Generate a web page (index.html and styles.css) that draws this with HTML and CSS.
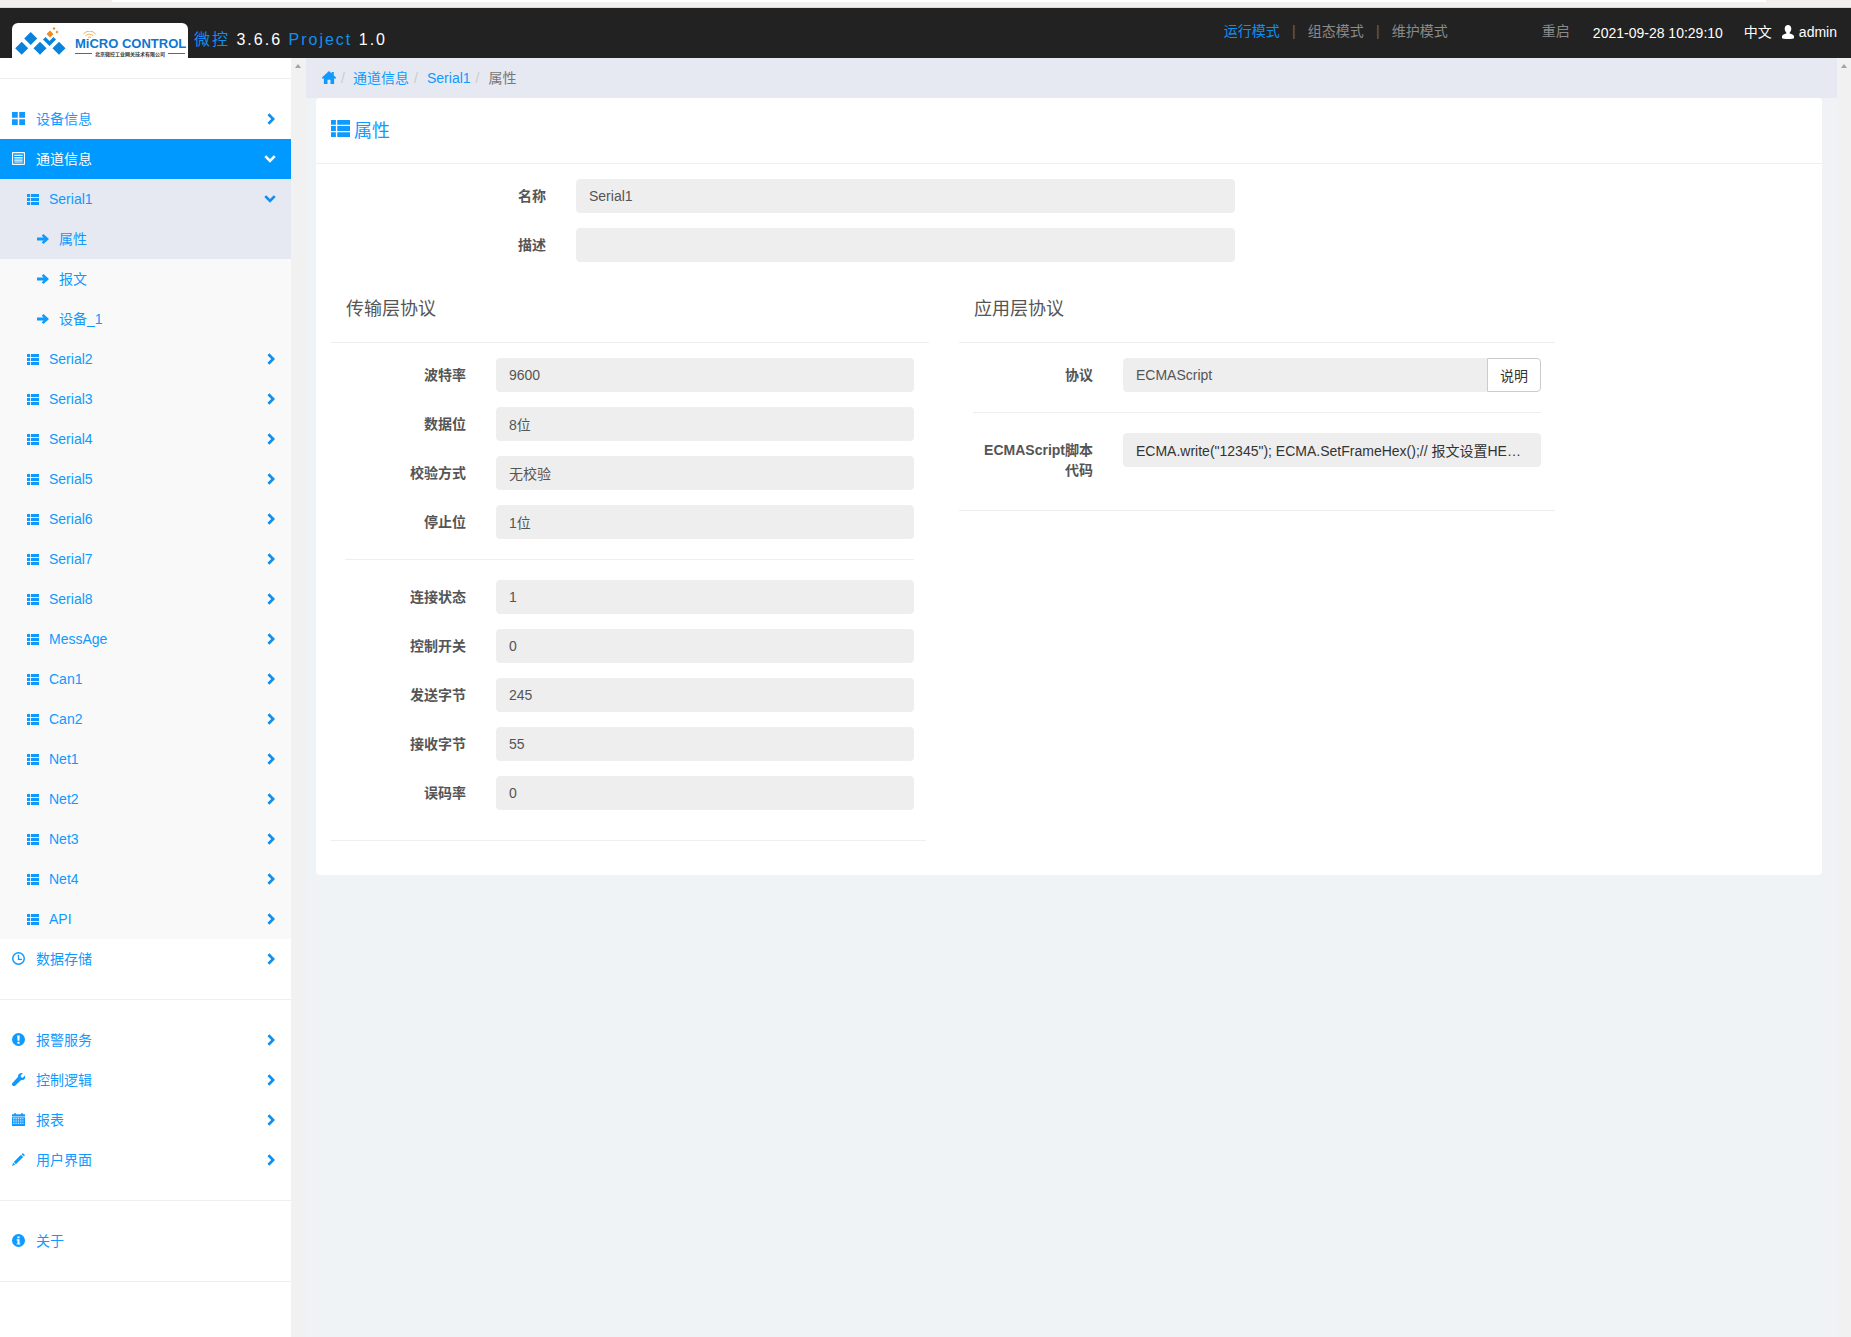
FILE: index.html
```html
<!DOCTYPE html>
<html lang="zh">
<head>
<meta charset="utf-8">
<title>微控 3.6.6</title>
<link rel="stylesheet" href="styles.css">
</head>
<body>
<svg class="defs" width="0" height="0" aria-hidden="true">
  <defs>
    <symbol id="i-large" viewBox="0 0 14 14"><path d="M0 0h6.200v6.200H0zM7.800 0H14v6.200H7.800zM0 7.800h6.200V14H0zM7.800 7.800H14V14H7.800z"/></symbol>
    <symbol id="i-listalt" viewBox="0 0 14 14"><path fill-rule="evenodd" d="M1 0h12a1 1 0 0 1 1 1v12a1 1 0 0 1-1 1H1a1 1 0 0 1-1-1V1a1 1 0 0 1 1-1zm.2 1.300v11.400h11.600V1.300zM2.500 3h9v1.400h-9zm0 2.500h9v1.400h-9zm0 2.500h9v1.400h-9zm0 2.200h9v1.200h-9z"/></symbol>
    <symbol id="i-list" viewBox="0 0 14 12" preserveAspectRatio="none"><path d="M0 0h3.600v3.400H0zM4.600 0H14v3.400H4.600zM0 4.300h3.600v3.400H0zM4.600 4.300H14v3.400H4.600zM0 8.600h3.600V12H0zM4.600 8.600H14V12H4.600z"/></symbol>
    <symbol id="i-arrow" viewBox="0 0 14 12" preserveAspectRatio="none"><path d="M7.500 0L14 6l-6.500 6-2-2 2.300-2.200H0V4.200h7.800L5.500 2z"/></symbol>
    <symbol id="i-home" viewBox="0 0 14 13"><path d="M7 0l2.600 2.400V1h2.200v3.400L14 6.600v.9h-1.900V13H8.500V8.700h-3V13H1.900V7.500H0v-.9z"/></symbol>
    <symbol id="i-user" viewBox="0 0 14 14"><path d="M7 0c2 0 3.300 1.600 3.300 3.800 0 1.500-.6 2.800-1.600 3.600v1c2.500.6 4.300 1.400 4.300 3v1.600c0 .6-2.600 1-6 1s-6-.4-6-1v-1.600c0-1.600 1.800-2.400 4.300-3v-1c-1-.8-1.600-2.100-1.600-3.600C3.700 1.600 5 0 7 0z"/></symbol>
    <symbol id="i-time" viewBox="0 0 14 14"><path fill-rule="evenodd" d="M7 0a7 7 0 1 1 0 14A7 7 0 0 1 7 0zm0 1.600a5.400 5.400 0 1 0 0 10.800A5.400 5.400 0 0 0 7 1.600zM6.300 3h1.400v4.300h3v1.400H6.300z"/></symbol>
    <symbol id="i-excl" viewBox="0 0 14 14"><path fill-rule="evenodd" d="M7 0a7 7 0 1 1 0 14A7 7 0 0 1 7 0zM5.600 2.600L6 8.300h2l.4-5.700zM5.800 9.300v2.200h2.400V9.300z"/></symbol>
    <symbol id="i-wrench" viewBox="0 0 14 14"><path d="M10.300 0c.5 0 1 .1 1.400.3L9.300 2.700l.4 1.900 1.900.4L14 2.600c.3.500.3 1 .3 1.500 0 2.300-2.200 4-4.400 3.500L3 14c-.7.600-1.600.2-2.400-.6C-.1 12.700-.4 11.800.2 11l6.400-6.900C6 1.900 8 0 10.300 0z"/></symbol>
    <symbol id="i-cal" viewBox="0 0 14 14"><path fill-rule="evenodd" d="M2.500 0h1.600v1.400h5.800V0h1.600v1.400H14v2.400H0V1.400h2.500zM0 4.600h14V14H0zm1.200 1v1.200h1.500V5.600zm2.500 0v1.200h1.500V5.600zm2.500 0v1.200h1.500V5.600zm2.500 0v1.200h1.500V5.600zm2.500 0v1.200h1.100V5.600zM1.200 8v1.200h1.500V8zm2.500 0v1.200h1.500V8zm2.500 0v1.200h1.500V8zm2.500 0v1.200h1.500V8zm2.500 0v1.200h1.100V8zm-10 2.400v1.200h1.500v-1.200zm2.500 0v1.200h1.500v-1.200zm2.500 0v1.200h1.500v-1.200zm2.500 0v1.200h1.500v-1.200zm2.500 0v1.200h1.100v-1.200z"/></symbol>
    <symbol id="i-pencil" viewBox="0 0 14 14"><path d="M11.700 0L14 2.300 12.700 3.600 10.400 1.300zM9.700 2l2.300 2.300-7.800 7.800-2.300-2.300zM1.300 10.500l2.200 2.200L0 14z"/></symbol>
    <symbol id="i-info" viewBox="0 0 14 14"><path fill-rule="evenodd" d="M7 0a7 7 0 1 1 0 14A7 7 0 0 1 7 0zM5.800 2.700v2h2.400v-2zM5 5.700v1.200h.9v3.200H5v1.200h4v-1.200h-.9V5.700z"/></symbol>
    <symbol id="i-right" viewBox="0 0 8 12"><path d="M0.500 2.200L2.400 0.300 8 6 2.400 11.700 0.500 9.800 4.200 6z"/></symbol>
    <symbol id="i-down" viewBox="0 0 12 8"><path d="M0.300 2.100L2.200 0.300 6 4 9.800 0.300 11.700 2.100 6 7.700z"/></symbol>
  </defs>
</svg>

<div class="chrome-strip"><div class="chrome-tab"></div></div>

<header class="topbar">
  <div class="logo">
    <svg class="logo-mark" viewBox="0 0 52 29" width="52" height="29">
      <path class="dia" d="M15.700 5l6.500 6.500-6.500 6.500-6.500-6.500zM6.700 14.800l6.500 6.500-6.500 6.500L.2 21.300zM25 14.800l6.500 6.500-6.500 6.500-6.500-6.500zM44 14.800l6.500 6.500-6.500 6.500-6.500-6.500zM28 12.500l2.500-2.500 4 4 4-4 2.500 2.500-6.500 6.500z"/>
      <path class="dot" d="M35 3.500L38.500 7 35 10.500 31.500 7zM39 0l1.500 1.500L39 3l-1.500-1.500zM42 3.500L43.500 5 42 6.500 40.500 5z"/>
    </svg>
    <div class="logo-words">
      <svg class="logo-wifi" viewBox="0 0 16 9" width="15" height="8"><path d="M1 3.500a9 9 0 0 1 14 0M3.500 5.500a6 6 0 0 1 9 0M6 7.500a3 3 0 0 1 4 0"/></svg>
      <div class="logo-en">MiCRO CONTROL</div>
      <div class="logo-cn">北京微控工业网关技术有限公司</div>
    </div>
  </div>
  <div class="brand"><span class="brand-blue">微控</span> 3.6.6 <span class="brand-blue">Project</span> 1.0</div>
  <nav class="modes">
    <a class="mode current">运行模式</a><span class="mode-sep">|</span>
    <a class="mode">组态模式</a><span class="mode-sep">|</span>
    <a class="mode">维护模式</a>
  </nav>
  <a class="restart">重启</a>
  <span class="clock">2021-09-28 10:29:10</span>
  <span class="lang">中文</span>
  <span class="account"><svg class="ico ico-user"><use href="#i-user"/></svg>admin</span>
</header>

<div class="shell">
  <aside class="sidebar">
    <div class="side-group side-first">
      <a class="side-item"><svg class="ico"><use href="#i-large"/></svg><span class="side-label">设备信息</span><svg class="chev"><use href="#i-right"/></svg></a>
      <a class="side-item is-active"><svg class="ico"><use href="#i-listalt"/></svg><span class="side-label">通道信息</span><svg class="chev-d"><use href="#i-down"/></svg></a>
      <a class="side-item lvl2 is-open"><svg class="ico"><use href="#i-list"/></svg><span class="side-label">Serial1</span><svg class="chev-d"><use href="#i-down"/></svg></a>
      <a class="side-item lvl3 is-open"><svg class="ico"><use href="#i-arrow"/></svg><span class="side-label">属性</span></a>
      <a class="side-item lvl3 sub"><svg class="ico"><use href="#i-arrow"/></svg><span class="side-label">报文</span></a>
      <a class="side-item lvl3 sub"><svg class="ico"><use href="#i-arrow"/></svg><span class="side-label">设备_1</span></a>
      <a class="side-item lvl2 sub"><svg class="ico"><use href="#i-list"/></svg><span class="side-label">Serial2</span><svg class="chev"><use href="#i-right"/></svg></a>
      <a class="side-item lvl2 sub"><svg class="ico"><use href="#i-list"/></svg><span class="side-label">Serial3</span><svg class="chev"><use href="#i-right"/></svg></a>
      <a class="side-item lvl2 sub"><svg class="ico"><use href="#i-list"/></svg><span class="side-label">Serial4</span><svg class="chev"><use href="#i-right"/></svg></a>
      <a class="side-item lvl2 sub"><svg class="ico"><use href="#i-list"/></svg><span class="side-label">Serial5</span><svg class="chev"><use href="#i-right"/></svg></a>
      <a class="side-item lvl2 sub"><svg class="ico"><use href="#i-list"/></svg><span class="side-label">Serial6</span><svg class="chev"><use href="#i-right"/></svg></a>
      <a class="side-item lvl2 sub"><svg class="ico"><use href="#i-list"/></svg><span class="side-label">Serial7</span><svg class="chev"><use href="#i-right"/></svg></a>
      <a class="side-item lvl2 sub"><svg class="ico"><use href="#i-list"/></svg><span class="side-label">Serial8</span><svg class="chev"><use href="#i-right"/></svg></a>
      <a class="side-item lvl2 sub"><svg class="ico"><use href="#i-list"/></svg><span class="side-label">MessAge</span><svg class="chev"><use href="#i-right"/></svg></a>
      <a class="side-item lvl2 sub"><svg class="ico"><use href="#i-list"/></svg><span class="side-label">Can1</span><svg class="chev"><use href="#i-right"/></svg></a>
      <a class="side-item lvl2 sub"><svg class="ico"><use href="#i-list"/></svg><span class="side-label">Can2</span><svg class="chev"><use href="#i-right"/></svg></a>
      <a class="side-item lvl2 sub"><svg class="ico"><use href="#i-list"/></svg><span class="side-label">Net1</span><svg class="chev"><use href="#i-right"/></svg></a>
      <a class="side-item lvl2 sub"><svg class="ico"><use href="#i-list"/></svg><span class="side-label">Net2</span><svg class="chev"><use href="#i-right"/></svg></a>
      <a class="side-item lvl2 sub"><svg class="ico"><use href="#i-list"/></svg><span class="side-label">Net3</span><svg class="chev"><use href="#i-right"/></svg></a>
      <a class="side-item lvl2 sub"><svg class="ico"><use href="#i-list"/></svg><span class="side-label">Net4</span><svg class="chev"><use href="#i-right"/></svg></a>
      <a class="side-item lvl2 sub"><svg class="ico"><use href="#i-list"/></svg><span class="side-label">API</span><svg class="chev"><use href="#i-right"/></svg></a>
      <a class="side-item"><svg class="ico"><use href="#i-time"/></svg><span class="side-label">数据存储</span><svg class="chev"><use href="#i-right"/></svg></a>
    </div>
    <div class="side-group">
      <a class="side-item"><svg class="ico"><use href="#i-excl"/></svg><span class="side-label">报警服务</span><svg class="chev"><use href="#i-right"/></svg></a>
      <a class="side-item"><svg class="ico"><use href="#i-wrench"/></svg><span class="side-label">控制逻辑</span><svg class="chev"><use href="#i-right"/></svg></a>
      <a class="side-item"><svg class="ico"><use href="#i-cal"/></svg><span class="side-label">报表</span><svg class="chev"><use href="#i-right"/></svg></a>
      <a class="side-item"><svg class="ico"><use href="#i-pencil"/></svg><span class="side-label">用户界面</span><svg class="chev"><use href="#i-right"/></svg></a>
    </div>
    <div class="side-group">
      <a class="side-item"><svg class="ico"><use href="#i-info"/></svg><span class="side-label">关于</span></a>
    </div>
  </aside>
  <div class="scrollbar"><span class="scroll-up"></span></div>

  <main class="main">
    <div class="crumbs">
      <a class="crumb-home"><svg class="ico ico-home"><use href="#i-home"/></svg></a><span class="crumb-sep">/</span>
      <a>通道信息</a><span class="crumb-sep crumb-sep-wide">/</span>
      <a>Serial1</a><span class="crumb-sep crumb-sep-wide">/</span>
      <span class="crumb-now">属性</span>
    </div>
    <section class="card">
      <h2 class="card-title"><svg class="ico ico-title"><use href="#i-list"/></svg>属性</h2>
      <div class="form-top">
        <div class="row"><label class="lbl">名称</label><input class="field" readonly value="Serial1"></div>
        <div class="row"><label class="lbl">描述</label><input class="field" readonly value=""></div>
      </div>
      <div class="cols">
        <div class="col col-left">
          <h3 class="col-title">传输层协议</h3>
          <div class="col-body">
            <div class="row"><label class="lbl">波特率</label><input class="field" readonly value="9600"></div>
            <div class="row"><label class="lbl">数据位</label><input class="field" readonly value="8位"></div>
            <div class="row"><label class="lbl">校验方式</label><input class="field" readonly value="无校验"></div>
            <div class="row"><label class="lbl">停止位</label><input class="field" readonly value="1位"></div>
            <hr class="rule">
            <div class="row"><label class="lbl">连接状态</label><input class="field" readonly value="1"></div>
            <div class="row"><label class="lbl">控制开关</label><input class="field" readonly value="0"></div>
            <div class="row"><label class="lbl">发送字节</label><input class="field" readonly value="245"></div>
            <div class="row"><label class="lbl">接收字节</label><input class="field" readonly value="55"></div>
            <div class="row"><label class="lbl">误码率</label><input class="field" readonly value="0"></div>
          </div>
        </div>
        <div class="col col-right">
          <h3 class="col-title">应用层协议</h3>
          <div class="col-body">
            <div class="row">
              <label class="lbl">协议</label>
              <div class="input-group"><input class="field" readonly value="ECMAScript"><button class="btn-help" type="button">说明</button></div>
            </div>
            <hr class="rule">
            <div class="row">
              <label class="lbl lbl-wrap">ECMAScript脚本代码</label>
              <input class="field field-dark" readonly value='ECMA.write("12345"); ECMA.SetFrameHex();// 报文设置HEX格式 ECMA.Send();'>
            </div>
          </div>
        </div>
      </div>
    </section>
  </main>
  <div class="scrollbar scrollbar-page"><span class="scroll-up"></span></div>
</div>
</body>
</html>
```
FILE: styles.css
```css
* { box-sizing: border-box; }
html, body { margin: 0; height: 1337px; overflow: hidden; }
body {
  font-family: "Liberation Sans", "Noto Sans CJK SC", sans-serif;
  font-size: 14px;
  color: #555;
  background: #eff3f6;
}
a { color: #0f9aff; text-decoration: none; }
.defs { position: absolute; }

.ico { width: 14px; height: 14px; fill: currentColor; flex: none; }

/* browser strip */
.chrome-strip { height: 8px; background: #f1f0ee; border-bottom: 1px solid #d9d9d9; padding-left: 112px; padding-right: 85px; }
.chrome-tab { height: 2px; background: #fff; }

/* top bar */
.topbar {
  height: 50px;
  background: #222;
  color: #fff;
  display: flex;
  align-items: flex-start;
  padding-left: 12px;
  overflow: hidden;
}
.logo {
  width: 176px;
  height: 35px;
  margin-top: 15px;
  background: #fff;
  border-radius: 6px 6px 0 0;
  display: flex;
  flex: none;
  padding: 4px 3px 0;
  gap: 8px;
}
.logo-mark { flex: none; }
.dia { fill: #0a82dc; }
.dot { fill: #f08a1d; }
.logo-words { display: flex; flex-direction: column; width: 110px; position: relative; padding-top: 11px; flex: none; }
.logo-wifi { position: absolute; top: 4px; left: 7px; fill: none; stroke: #f0a63a; stroke-width: 1; }
.logo-en {
  font: 700 13px/12px "Liberation Sans", sans-serif;
  color: #0a78d4;
  white-space: nowrap;
}
.logo-cn {
  font: 700 5px/7px "Noto Sans CJK SC", sans-serif;
  color: #333;
  white-space: nowrap;
  display: flex;
  align-items: center;
  gap: 3px;
}
.logo-cn::before, .logo-cn::after { content: ""; flex: 1; height: 1px; background: #666; }
.brand {
  margin: 22px 0 0 6px;
  font-size: 16px;
  line-height: 20px;
  letter-spacing: 2px;
  white-space: nowrap;
}
.brand-blue { color: #0f8ff0; }
.modes { margin-left: auto; display: flex; align-items: center; line-height: 20px; margin-top: 13px; color: #888; }
.mode { color: #8a8a8a; }
.mode.current { color: #0f8ff0; }
.mode-sep { width: 28px; text-align: center; color: #666; }
.restart { color: #8a8a8a; margin: 13px 0 0 94px; line-height: 20px; }
.clock { margin: 15px 0 0 23px; line-height: 20px; white-space: nowrap; }
.lang { margin: 14px 0 0 21px; line-height: 20px; }
.account { margin: 14px 14px 0 9px; line-height: 20px; display: flex; align-items: center; gap: 4px; }

/* shell */
.shell { display: flex; height: 1279px; }
.sidebar { width: 291px; flex: none; background: #fff; padding-top: 20px; }
.side-group { border-top: 1px solid #eee; padding: 20px 0; }
.side-group:last-child { border-bottom: 1px solid #eee; }
.side-item {
  display: flex;
  align-items: center;
  height: 40px;
  padding: 0 16px 0 12px;
  color: #0f9aff;
}
.side-label { margin-left: 11px; flex: 1; line-height: 20px; }
.side-item .ico { width: 13px; height: 13px; margin-top: -2px; }
.lvl2 { padding-left: 27px; }
.side-item.lvl2 .ico { height: 11px; width: 12px; margin-top: 0; }
.lvl2 .side-label { margin-left: 10px; }
.lvl3 { padding-left: 37px; }
.side-item.lvl3 .ico { height: 10px; width: 12px; margin-top: 0; }
.lvl3 .side-label { margin-left: 10px; }
.sub { background: #f9f9f9; }
.is-open { background: #e6e9f1; }
.is-active { background: #0099ff; color: #fff; }
.chev { width: 8px; height: 12px; fill: #0f8ff0; flex: none; }
.chev-d { width: 12px; height: 8px; fill: currentColor; flex: none; margin-right: -1px; }
.lvl2 .chev-d { fill: #0f8ff0; }

.scrollbar { width: 15px; flex: none; background: #f1f1f1; position: relative; }
.scrollbar-page { width: 14px; }
.scroll-up {
  position: absolute;
  top: 6px;
  left: 4px;
  border-left: 3.500px solid transparent;
  border-right: 3.500px solid transparent;
  border-bottom: 4px solid #a3a3a3;
}

/* main */
.main { flex: 1; min-width: 0; display: flex; flex-direction: column; }
.crumbs {
  height: 40px;
  background: #e6e9f1;
  display: flex;
  align-items: center;
  padding-left: 16px;
  line-height: 20px;
}
.crumb-home { display: flex; }
.ico-home { height: 13px; margin-top: -2px; }
.crumb-sep { color: #ccc; width: 17px; padding-left: 5px; }
.crumb-sep-wide { width: 18px; }
.crumb-now { color: #777; }

.card {
  margin: 0 15px 0 10px;
  height: 777px;
  background: #fff;
  border-radius: 4px;
}
.card-title {
  margin: 0;
  height: 66px;
  border-bottom: 1px solid #eee;
  padding: 0 15px 4px;
  display: flex;
  align-items: center;
  font-size: 18px;
  font-weight: 400;
  color: #0f9aff;
  gap: 4px;
}
.ico-title { width: 19px; height: 17px; }

.form-top { width: 919px; padding-top: 15px; }
.row { display: flex; align-items: flex-start; margin-bottom: 15px; }
.lbl {
  font-weight: 700;
  color: #555;
  text-align: right;
  line-height: 34px;
  flex: none;
  width: 121px;
  margin-right: 30px;
}
.form-top .lbl { width: 230px; }
.field {
  flex: 1;
  min-width: 0;
  height: 34px;
  background: #eee;
  border: 1px solid #eee;
  border-radius: 4px;
  padding: 0 12px;
  font: inherit;
  color: #555;
  outline: none;
  text-overflow: ellipsis;
}
.field-dark { color: #333; }

.cols { display: flex; padding-left: 15px; gap: 30px; }
.col { flex: none; }
.col-left { width: 598px; }
.col-right { width: 596px; }
.col-title {
  margin: 0;
  height: 66px;
  padding: 19px 15px 0;
  font-size: 18px;
  line-height: 26px;
  font-weight: 400;
  color: #555;
  border-bottom: 1px solid #eee;
}
.col-body { padding: 15px 14px 0; border-bottom: 1px solid #eee; }
.col-left .col-body { height: 498px; margin-right: 3px; padding-right: 12px; }
.col-right .col-body { height: 168px; }
.rule { border: 0; border-top: 1px solid #eee; margin: 20px 0; }
.col-right .lbl { width: 120px; }
.lbl-wrap { line-height: 20px; padding-top: 7px; }
.input-group { flex: 1; display: flex; min-width: 0; }
.input-group .field { border-radius: 4px 0 0 4px; }
.btn-help {
  flex: none;
  width: 54px;
  height: 34px;
  background: #fff;
  border: 1px solid #ccc;
  border-radius: 0 4px 4px 0;
  font: inherit;
  color: #333;
  padding: 0;
}
```
